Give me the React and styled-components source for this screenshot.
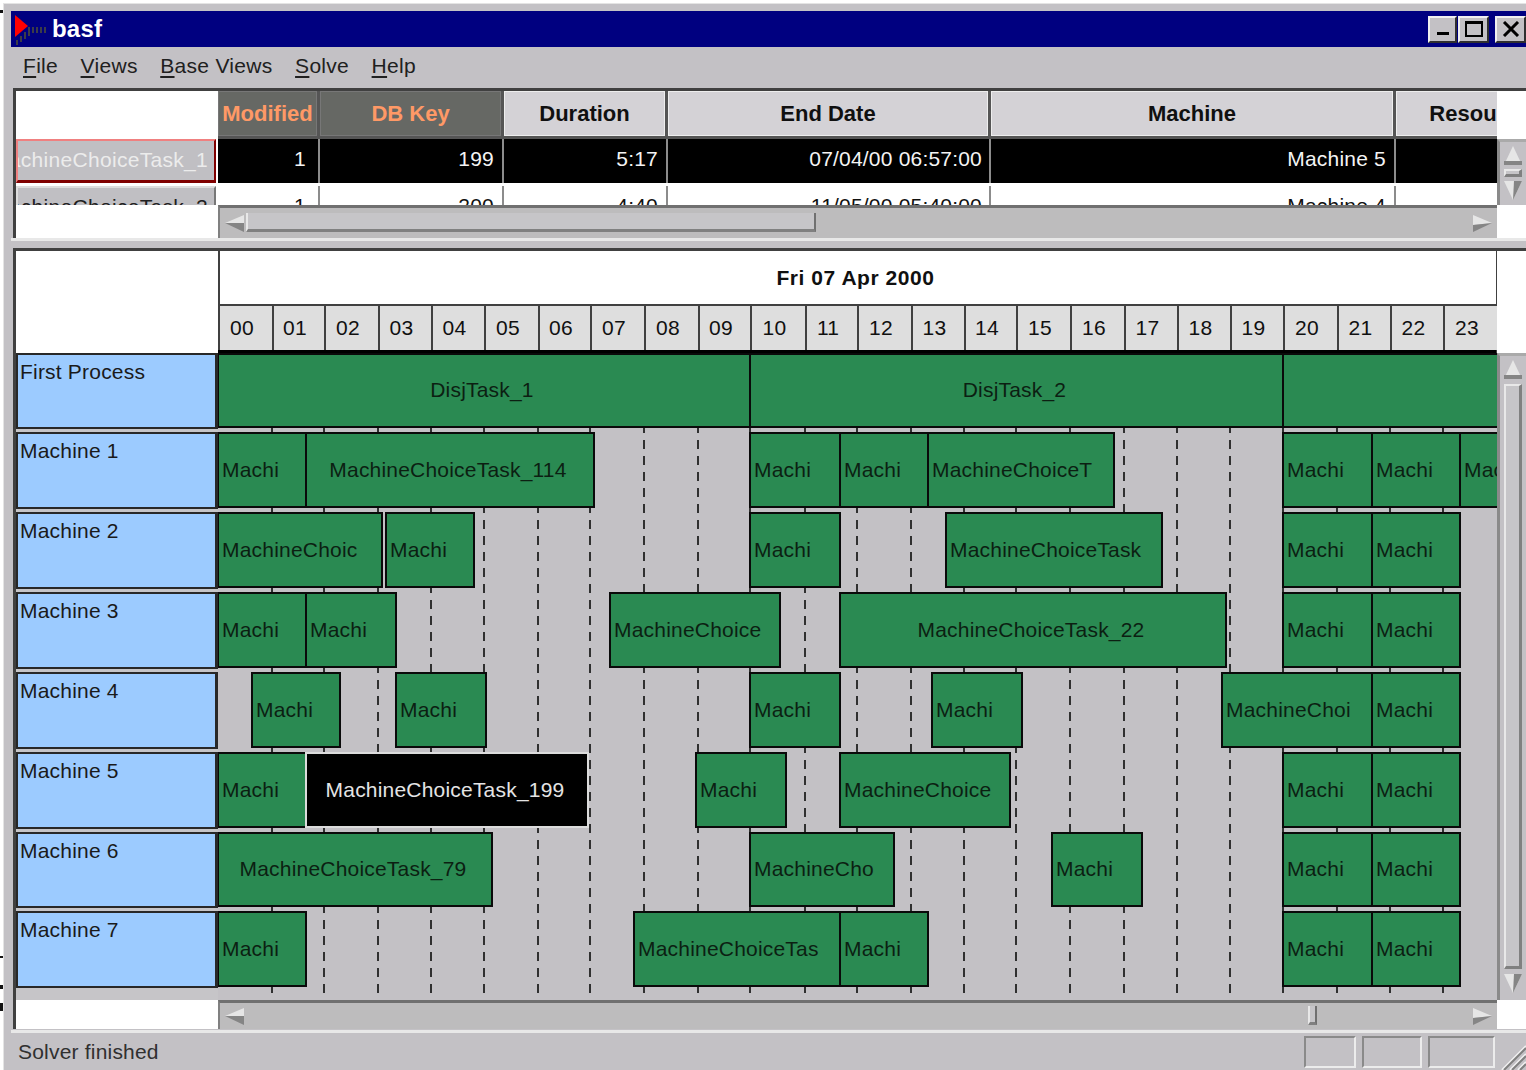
import React from 'react';
import styled, { createGlobalStyle } from 'styled-components';

const HOUR_X = [218, 272, 324, 378, 431, 484, 538, 590, 644, 698, 750, 805, 857, 911, 964, 1016, 1070, 1124, 1177, 1230, 1283, 1337, 1390, 1443, 1497];
const ORIGIN = 218;
const hourColumns = HOUR_X.slice(1).map((x, i) => `${x - HOUR_X[i]}px`).join(' ');

const TASK = 'MachineChoiceTask';

const ROWS = [
  { name: 'First Process', height: 79, process: true, tasks: [
    [218, 750, 'DisjTask_1', 'center'], [750, 1283, 'DisjTask_2', 'center'], [1283, 1500, ''],
  ] },
  { name: 'Machine 1', height: 80, tasks: [
    [218, 306, 'Machi'], [306, 594, `${TASK}_114`, 'center'], [750, 840, 'Machi'], [840, 928, 'Machi'],
    [928, 1114, 'MachineChoiceT'], [1283, 1372, 'Machi'], [1372, 1460, 'Machi'], [1460, 1504, 'Machi'],
  ] },
  { name: 'Machine 2', height: 80, tasks: [
    [218, 382, 'MachineChoic'], [386, 474, 'Machi'], [750, 840, 'Machi'], [946, 1162, TASK],
    [1283, 1372, 'Machi'], [1372, 1460, 'Machi'],
  ] },
  { name: 'Machine 3', height: 80, tasks: [
    [218, 306, 'Machi'], [306, 396, 'Machi'], [610, 780, 'MachineChoice'], [840, 1226, `${TASK}_22`, 'center'],
    [1283, 1372, 'Machi'], [1372, 1460, 'Machi'],
  ] },
  { name: 'Machine 4', height: 80, tasks: [
    [252, 340, 'Machi'], [396, 486, 'Machi'], [750, 840, 'Machi'], [932, 1022, 'Machi'],
    [1222, 1372, 'MachineChoi'], [1372, 1460, 'Machi'],
  ] },
  { name: 'Machine 5', height: 80, tasks: [
    [218, 306, 'Machi'], [306, 588, `${TASK}_199`, 'center', true], [696, 786, 'Machi'], [840, 1010, 'MachineChoice'],
    [1283, 1372, 'Machi'], [1372, 1460, 'Machi'],
  ] },
  { name: 'Machine 6', height: 79, tasks: [
    [218, 492, `${TASK}_79`, 'center'], [750, 894, 'MachineCho'], [1052, 1142, 'Machi'],
    [1283, 1372, 'Machi'], [1372, 1460, 'Machi'],
  ] },
  { name: 'Machine 7', height: 80, tasks: [
    [218, 306, 'Machi'], [634, 840, 'MachineChoiceTas'], [840, 928, 'Machi'],
    [1283, 1372, 'Machi'], [1372, 1460, 'Machi'],
  ] },
];

const COLUMNS = [
  { title: 'Modified', width: 102, pad: 12, sorted: true, first: '1', second: '1' },
  { title: 'DB Key', width: 184, pad: 8, sorted: true, first: '199', second: '200' },
  { title: 'Duration', width: 164, pad: 8, first: '5:17', second: '4:40' },
  { title: 'End Date', width: 323, pad: 7, first: '07/04/00 06:57:00', second: '11/05/00 05:40:00' },
  { title: 'Machine', width: 405, pad: 8, first: 'Machine 5', second: 'Machine 4' },
  { title: 'Resource', width: 170, pad: 8, first: '', second: '' },
];

const GlobalStyle = createGlobalStyle`
  html, body {
    margin: 0;
    background: #ffffff;
    overflow: hidden;
  }
  body {
    font-family: "Liberation Sans", Arial, sans-serif;
    font-size: 21px;
    letter-spacing: 0.2px;
    color: #101010;
  }
`;

const Desktop = styled.div`
  position: relative;
  width: 1526px;
  height: 1070px;
  padding: 3px 0 0 3px;
  box-sizing: border-box;
  overflow: hidden;
`;

/* stray bits of the desktop showing to the left of the window */
const Speck = styled.div`
  position: absolute;
  left: 0;
  width: 3px;
  background: #111111;
`;

const Frame = styled.div`
  width: 1540px;
  height: 1080px;
  box-sizing: border-box;
  padding: 7px 0 0 7px;
  background: #c3c1c5;
  border-top: 1px solid #e4e4e4;
  border-left: 1px solid #e4e4e4;
`;

const TitleBar = styled.div`
  width: 1515px;
  height: 36px;
  display: flex;
  align-items: center;
  background: #000080;
`;

const TitleText = styled.span`
  font-size: 24px;
  font-weight: 700;
  color: #ffffff;
  margin-left: 5px;
`;

const CaptionButtons = styled.div`
  margin-left: auto;
  display: flex;
  height: 27px;
`;

const CaptionButton = styled.div`
  width: ${(p) => p.$w}px;
  height: 27px;
  margin-left: ${(p) => p.$gap}px;
  box-sizing: border-box;
  display: flex;
  align-items: center;
  justify-content: center;
  background: #c3c1c5;
  border-top: 2px solid #f0f0f0;
  border-left: 2px solid #f0f0f0;
  border-right: 2px solid #303030;
  border-bottom: 2px solid #303030;
`;

const MenuBar = styled.div`
  height: 41px;
  box-sizing: border-box;
  display: flex;
  align-items: center;
  padding: 0 0 3px 12px;
`;

const MenuItem = styled.span`
  margin-right: 22.5px;
  letter-spacing: 0.3px;
  color: #202020;
  u {
    text-underline-offset: 3px;
    text-decoration-thickness: 2px;
  }
`;

const TablePanel = styled.div`
  width: 1513px;
  height: 150px;
  margin-left: 2px;
  box-sizing: border-box;
  background: #ffffff;
  border-top: 3px solid #404040;
  border-left: 3px solid #404040;
  display: grid;
  grid-template-columns: 202px 1279px 29px;
  grid-template-rows: 48px 66px 33px;
`;

const HeaderRow = styled.div`
  display: flex;
  overflow: hidden;
`;

const HeaderCell = styled.div`
  width: ${(p) => p.$w}px;
  flex: none;
  box-sizing: border-box;
  display: flex;
  align-items: center;
  justify-content: center;
  white-space: nowrap;
  overflow: hidden;
  font-size: 22px;
  font-weight: 700;
  letter-spacing: 0;
  color: ${(p) => (p.$sorted ? '#ff9966' : '#101010')};
  background: ${(p) => (p.$sorted ? '#666864' : '#d4d2d6')};
  border-right: 3px solid #555555;
  border-bottom: 3px solid #555555;
  box-shadow: inset 0 0 0 1px ${(p) => (p.$sorted ? '#777777' : '#eeeeee')};
`;

const RowHeaders = styled.div`
  display: flex;
  flex-direction: column;
  overflow: hidden;
  background: #ffffff;
  padding-right: 2px;
`;

const RowHeader = styled.div`
  height: 44px;
  flex: none;
  margin-bottom: 3px;
  box-sizing: border-box;
  display: flex;
  align-items: center;
  justify-content: flex-end;
  overflow: hidden;
  white-space: nowrap;
  padding: 0 6px 2px 0;
  letter-spacing: 0.3px;
  color: ${(p) => (p.$selected ? '#ececec' : '#202020')};
  background: #c0bfc3;
  border-style: solid;
  border-width: 2px 2px 3px 2px;
  border-color: ${(p) => (p.$selected ? '#f08080 #800000 #800000 #f08080' : '#dddddd #777777 #777777 #dddddd')};
`;

const TableBody = styled.div`
  overflow: hidden;
  background: #ffffff;
`;

const TableRow = styled.div`
  height: 44px;
  margin-bottom: 3px;
  display: flex;
  color: ${(p) => (p.$selected ? '#f4f4f4' : '#101010')};
  background: ${(p) => (p.$selected ? '#000000' : '#ffffff')};
`;

const TableCell = styled.div`
  width: ${(p) => p.$w}px;
  flex: none;
  box-sizing: border-box;
  display: flex;
  align-items: center;
  justify-content: flex-end;
  padding: 0 ${(p) => p.$pad}px 4px 0;
  border-right: 2px solid #8c8c8c;
`;

const ScrollCorner = styled.div`
  background: #ffffff;
`;

const HScroll = styled.div`
  height: ${(p) => p.$h}px;
  display: flex;
  align-items: center;
  box-sizing: border-box;
  padding: 0 4px;
  background: #bdbcbd;
  border-top: 3px solid #707070;
  border-left: 2px solid #808080;
`;

const HScrollTrack = styled.div`
  position: relative;
  flex: 1;
  height: 22px;
  display: flex;
  align-items: center;
  justify-content: space-between;
`;

const HThumb = styled.div`
  position: absolute;
  top: 1px;
  left: ${(p) => p.$x}px;
  width: ${(p) => p.$w}px;
  height: 19px;
  box-sizing: border-box;
  background: #c6c5c8;
  border-left: 2px solid #e8e8e8;
  border-right: 2px solid #707070;
  border-bottom: 3px solid #808080;
`;

const VScroll = styled.div`
  display: flex;
  flex-direction: column;
  align-items: center;
  box-sizing: border-box;
  padding-top: 4px;
  background: #c3c1c5;
  border-left: 3px solid #8a8a8a;
  border-top: 3px solid #aaaaaa;
`;

const VThumb = styled.div`
  width: 18px;
  flex: ${(p) => (p.$grow ? 1 : 'none')};
  height: ${(p) => (p.$grow ? 'auto' : '8px')};
  margin: ${(p) => (p.$grow ? 5 : 4)}px 0;
  box-sizing: border-box;
  background: #c6c5c8;
  border-left: 2px solid #e8e8e8;
  border-right: 3px solid #808080;
  border-top: 2px solid #e8e8e8;
  border-bottom: 3px solid #808080;
`;

const Splitter = styled.div`
  height: 10px;
  border-top: 3px solid #e8e8e8;
  box-sizing: border-box;
`;

const GanttPanel = styled.div`
  width: 1513px;
  margin-left: 2px;
  box-sizing: border-box;
  background: #ffffff;
  border-top: 3px solid #404040;
  border-left: 3px solid #404040;
  display: grid;
  grid-template-columns: 202px 1279px 32px;
  grid-template-rows: 102px 647px 29px;
`;

const DateHeader = styled.div`
  display: flex;
  flex-direction: column;
  border-left: 2px solid #404040;
  border-right: 2px solid #404040;
  margin-right: -1px;
`;

const DateLabel = styled.div`
  height: 53px;
  box-sizing: border-box;
  padding-right: 5px;
  display: flex;
  align-items: center;
  justify-content: center;
  font-weight: 700;
  letter-spacing: 0.55px;
  color: #101010;
`;

const HourRow = styled.div`
  display: grid;
  grid-template-columns: ${hourColumns};
  height: 49px;
  margin-left: -2px;
  box-sizing: border-box;
  border-top: 2px solid #404040;
  border-bottom: 3px solid #000000;
`;

const HourCell = styled.div`
  display: flex;
  align-items: center;
  justify-content: center;
  padding-right: 8px;
  background: #dedede;
  border-left: 2px solid #404040;
`;

const LabelColumn = styled.div`
  display: flex;
  flex-direction: column;
  background: #c6c5c8;
`;

const RowLabel = styled.div`
  height: ${(p) => p.$h - 3}px;
  margin-bottom: 3px;
  flex: none;
  box-sizing: border-box;
  padding: 5px 0 0 2px;
  color: #1a1a1a;
  background: #9ccbff;
  border: solid #282828;
  border-width: 2px 3px 2px 2px;
`;

const TrackColumn = styled.div`
  position: relative;
  display: flex;
  flex-direction: column;
  overflow: hidden;
  background: #c3c1c5;
`;

/* the hour marks run unbroken behind all machine rows */
const MarkLayer = styled.div`
  position: absolute;
  top: 71px;
  left: 0;
  right: 0;
  bottom: 6px;
`;

const HourMark = styled.div`
  position: absolute;
  top: 0;
  bottom: 0;
  width: 2px;
  background: repeating-linear-gradient(to bottom, #303030 0 9px, transparent 9px 16px);
`;

const Track = styled.div`
  position: relative;
  height: ${(p) => p.$h}px;
  flex: none;
`;

const TaskBar = styled.div`
  position: absolute;
  top: 0;
  bottom: 4px;
  box-sizing: border-box;
  display: flex;
  align-items: center;
  justify-content: ${(p) => (p.$align === 'center' ? 'center' : 'flex-start')};
  padding: 0 ${(p) => (p.$align === 'center' ? 4 : 0)}px 1px ${(p) => (p.$align === 'center' ? 0 : 3)}px;
  white-space: nowrap;
  overflow: hidden;
  color: ${(p) => (p.$selected ? '#e4e4e4' : '#0c1f12')};
  background: ${(p) => (p.$selected ? '#000000' : '#2a8a52')};
  border: 2px solid ${(p) => (p.$selected ? '#dcdcdc' : '#0a0a0a')};
  z-index: ${(p) => (p.$selected ? 1 : 0)};
`;

const GanttVScroll = styled(VScroll)`
  grid-row: 2;
  grid-column: 3;
  width: 29px;
  padding-bottom: 7px;
`;

const StatusBar = styled.div`
  width: 1515px;
  height: 40px;
  margin-top: 1px;
  box-sizing: border-box;
  border-top: 3px solid #e8e8e8;
  display: flex;
  align-items: center;
  padding-left: 7px;
  position: relative;
  color: #303030;
`;

const StatusCells = styled.div`
  margin-left: auto;
  display: flex;
  padding-right: 31px;
`;

const StatusCell = styled.div`
  width: ${(p) => p.$w}px;
  height: 32px;
  margin-left: 6px;
  box-sizing: border-box;
  border-top: 2px solid #8a8a8a;
  border-left: 2px solid #8a8a8a;
  border-right: 2px solid #ececec;
  border-bottom: 2px solid #ececec;
`;

const Grip = styled.svg`
  position: absolute;
  right: 0;
  bottom: 0;
`;

const AppIcon = () => (
  <svg width="34" height="34" viewBox="0 0 34 34" style={{ marginLeft: 2 }}>
    <g stroke="#3c3c48" strokeWidth="2">
      <path d="M4 33V28M8 30V24M12 27V20M16 24V15M20 21V15M24 21V15M28 21V15M32 21V15" />
    </g>
    <path d="M2 3 L15 14 L2 25 Z" fill="#ff0000" />
  </svg>
);

// raised scroll arrow, light on one facet and dark on the other
const Arrow = ({ dir }) => {
  const shapes = {
    left: ['M20 1 L1 9 L20 12 Z', 'M1 9 L20 9 L20 18 Z'],
    right: ['M1 1 L20 9 L1 11 Z', 'M1 18 L1 11 L20 9 Z'],
    up: ['M10 0 L19 19 L1 19 Z', 'M1 15 L19 15 L19 19 L1 19 Z'],
    down: ['M1 0 L19 0 L10 19 Z', 'M11 0 L19 0 L10 19 Z'],
  };
  const vertical = dir === 'up' || dir === 'down';
  return (
    <svg
      width={vertical ? 20 : 21}
      height="19"
      viewBox={vertical ? '0 0 20 19' : '0 0 21 19'}
      style={{ flex: 'none', position: 'relative' }}
    >
      <path d={shapes[dir][0]} fill="#e6e6e6" />
      <path d={shapes[dir][1]} fill="#858585" />
    </svg>
  );
};

const Underlined = ({ first, rest }) => (
  <>
    <u>{first}</u>
    {rest}
  </>
);

export default function App() {
  return (
    <Desktop>
      <GlobalStyle />
      <Speck style={{ top: 10, height: 3 }} />
      <Speck style={{ top: 956, height: 2 }} />
      <Speck style={{ top: 985, height: 4 }} />
      <Speck style={{ top: 1003, height: 8 }} />
      <Frame>
        <TitleBar>
          <AppIcon />
          <TitleText>basf</TitleText>
          <CaptionButtons>
            <CaptionButton $w={29} $gap={0}>
              <svg width="16" height="16" viewBox="0 0 16 16"><rect x="2" y="11" width="12" height="3" fill="#000" /></svg>
            </CaptionButton>
            <CaptionButton $w={31} $gap={1}>
              <svg width="20" height="18" viewBox="0 0 20 18"><path d="M2 2H18V16H2Z M2 3H18" fill="none" stroke="#000" strokeWidth="2" /></svg>
            </CaptionButton>
            <CaptionButton $w={31} $gap={6}>
              <svg width="18" height="16" viewBox="0 0 18 16"><path d="M2 1L16 15M16 1L2 15" stroke="#000" strokeWidth="3" /></svg>
            </CaptionButton>
          </CaptionButtons>
        </TitleBar>

        <MenuBar>
          <MenuItem><Underlined first="F" rest="ile" /></MenuItem>
          <MenuItem><Underlined first="V" rest="iews" /></MenuItem>
          <MenuItem><Underlined first="B" rest="ase Views" /></MenuItem>
          <MenuItem><Underlined first="S" rest="olve" /></MenuItem>
          <MenuItem><Underlined first="H" rest="elp" /></MenuItem>
        </MenuBar>

        <TablePanel>
          <ScrollCorner />
          <HeaderRow>
            {COLUMNS.map((c) => (
              <HeaderCell key={c.title} $w={c.width} $sorted={c.sorted}>{c.title}</HeaderCell>
            ))}
          </HeaderRow>
          <ScrollCorner />

          <RowHeaders>
            <RowHeader $selected>MachineChoiceTask_1</RowHeader>
            <RowHeader>MachineChoiceTask_2</RowHeader>
          </RowHeaders>
          <TableBody>
            <TableRow $selected>
              {COLUMNS.map((c) => <TableCell key={c.title} $w={c.width} $pad={c.pad}>{c.first}</TableCell>)}
            </TableRow>
            <TableRow>
              {COLUMNS.map((c) => <TableCell key={c.title} $w={c.width} $pad={c.pad}>{c.second}</TableCell>)}
            </TableRow>
          </TableBody>
          <VScroll>
            <Arrow dir="up" />
            <VThumb />
            <Arrow dir="down" />
          </VScroll>

          <ScrollCorner />
          <HScroll $h={33}>
            <HScrollTrack>
              <Arrow dir="left" />
              <HThumb $x={22} $w={570} />
              <Arrow dir="right" />
            </HScrollTrack>
          </HScroll>
          <ScrollCorner />
        </TablePanel>

        <Splitter />

        <GanttPanel>
          <ScrollCorner />
          <DateHeader>
            <DateLabel>Fri 07 Apr 2000</DateLabel>
            <HourRow>
              {HOUR_X.slice(0, 24).map((_, h) => (
                <HourCell key={h}>{String(h).padStart(2, '0')}</HourCell>
              ))}
            </HourRow>
          </DateHeader>
          <ScrollCorner />

          <LabelColumn>
            {ROWS.map((r) => <RowLabel key={r.name} $h={r.height}>{r.name}</RowLabel>)}
          </LabelColumn>
          <TrackColumn>
            <MarkLayer>
              {HOUR_X.slice(1, 24).map((x) => <HourMark key={x} style={{ left: x - ORIGIN - 1 }} />)}
            </MarkLayer>
            {ROWS.map((r) => (
              <Track key={r.name} $h={r.height}>
                {r.tasks.map(([from, to, label, align, selected]) => (
                  <TaskBar
                    key={from}
                    $align={align}
                    $selected={selected}
                    style={{ left: from - ORIGIN - 1, width: to - from + 2 }}
                  >
                    {label}
                  </TaskBar>
                ))}
              </Track>
            ))}
          </TrackColumn>
          <GanttVScroll>
            <Arrow dir="up" />
            <VThumb $grow />
            <Arrow dir="down" />
          </GanttVScroll>

          <ScrollCorner />
          <HScroll $h={29}>
            <HScrollTrack>
              <Arrow dir="left" />
              <HThumb $x={1084} $w={9} />
              <Arrow dir="right" />
            </HScrollTrack>
          </HScroll>
          <ScrollCorner />
        </GanttPanel>

        <StatusBar>
          Solver finished
          <StatusCells>
            <StatusCell $w={52} />
            <StatusCell $w={60} />
            <StatusCell $w={67} />
          </StatusCells>
          <Grip width="30" height="30" viewBox="0 0 30 30">
            <path d="M6 30L30 6M14 30L30 14M22 30L30 22" stroke="#f0f0f0" strokeWidth="2" />
            <path d="M8 30L30 8M16 30L30 16M24 30L30 24" stroke="#808080" strokeWidth="2" />
          </Grip>
        </StatusBar>
      </Frame>
    </Desktop>
  );
}
